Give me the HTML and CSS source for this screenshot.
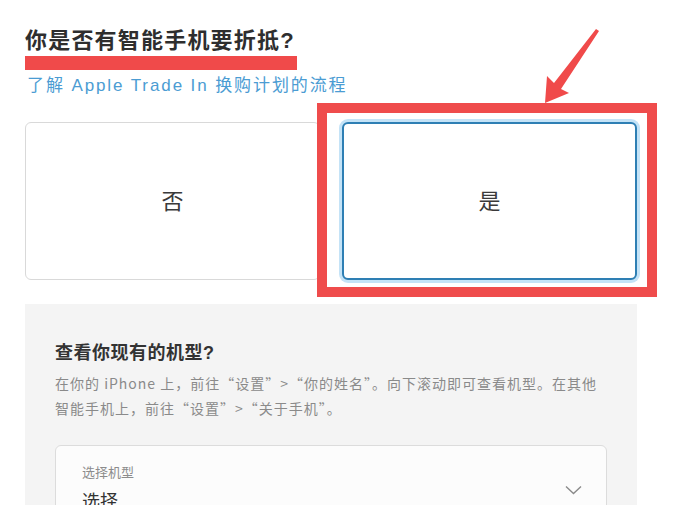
FILE: index.html
```html
<!DOCTYPE html>
<html lang="zh-CN">
<head>
<meta charset="utf-8">
<title>Apple Trade In</title>
<link rel="stylesheet" href="styles.css">
</head>
<body>
<div class="page">
  <h1 class="title">你是否有智能手机要折抵?</h1>
  <a class="link" href="#">了解 Apple Trade In 换购计划的流程</a>
  <div class="choices">
    <div class="choice">否</div>
    <div class="choice selected">是</div>
  </div>
  <section class="panel">
    <h2 class="panel-title">查看你现有的机型?</h2>
    <p class="panel-text">在你的 iPhone 上，前往“设置”&gt;“你的姓名”。向下滚动即可查看机型。在其他<br>智能手机上，前往“设置”&gt;“关于手机”。</p>
    <div class="select">
      <div class="select-text">
        <span class="select-label">选择机型</span>
        <span class="select-value">选择</span>
      </div>
      <svg class="chevron" width="17" height="10" viewBox="0 0 17 10"><polyline points="1,1.5 8.5,8.5 16,1.5" fill="none" stroke="#8a8a8a" stroke-width="1.4"/></svg>
    </div>
  </section>
  <svg class="annotations" width="675" height="505" viewBox="0 0 675 505">
    <rect x="25" y="56" width="272" height="14" fill="#f04a4a"/>
    <rect x="322" y="108" width="330" height="184" fill="none" stroke="#ef4c4c" stroke-width="10"/>
    <polygon points="545,103 547,76 554,83 596,29 599,31 561,89 569,93" fill="#f04a4a"/>
  </svg>
</div>
</body>
</html>
```
FILE: styles.css
```css
* { box-sizing: border-box; }
html, body { margin: 0; padding: 0; background: #fff; }
body {
  font-family: "Liberation Sans", "Noto Sans CJK SC", sans-serif;
  color: #333;
  overflow: hidden;
  height: 505px;
}
.page {
  position: relative;
  width: 675px;
  height: 505px;
  padding: 28px 38px 0 25px;
}
.title {
  margin: 0;
  font-size: 22px;
  line-height: 26px;
  font-weight: 700;
  letter-spacing: 1.2px;
  color: #2e2e2e;
}
.link {
  display: block;
  margin-top: 22px;
  font-size: 17px;
  line-height: 20px;
  letter-spacing: 1.9px;
  color: #4b9cd3;
  text-decoration: none;
  margin-left: 2px;
}
.choices {
  display: grid;
  grid-template-columns: 295px 295px;
  column-gap: 22px;
  margin-top: 26px;
}
.choice {
  height: 158px;
  display: flex;
  align-items: center;
  justify-content: center;
  border: 1px solid #d9d9d9;
  border-radius: 6px;
  background: #fff;
  font-size: 22px;
  color: #3a3a3a;
  padding-bottom: 5px;
}
.selected {
  border: 2px solid #2e7fb4;
  box-shadow: 0 0 0 3px #c4e3f7;
}
.panel {
  margin-top: 24px;
  width: 612px;
  height: 220px;
  background: #f4f4f4;
  padding: 37px 30px 0 30px;
}
.panel-title {
  margin: 0;
  font-size: 18px;
  line-height: 24px;
  font-weight: 700;
  letter-spacing: 0.5px;
  color: #333;
}
.panel-text {
  margin: 6px 0 0 0;
  font-family: "Noto Sans CJK SC", "Liberation Sans", sans-serif;
  font-size: 14px;
  line-height: 25px;
  letter-spacing: 1px;
  color: #8a8a8a;
}
.select {
  margin-top: 24px;
  width: 552px;
  height: 80px;
  background: #fcfcfc;
  border: 1px solid #dcdcdc;
  border-radius: 6px;
  display: flex;
  justify-content: space-between;
  align-items: flex-start;
  padding: 18px 24px 0 26px;
}
.select-text {
  display: flex;
  flex-direction: column;
}
.select-label {
  font-size: 13px;
  line-height: 18px;
  color: #8c8c8c;
}
.select-value {
  margin-top: 8px;
  font-size: 18px;
  line-height: 24px;
  color: #333;
}
.chevron {
  margin-top: 21px;
}
.annotations {
  position: absolute;
  left: 0;
  top: 0;
  pointer-events: none;
}
```
